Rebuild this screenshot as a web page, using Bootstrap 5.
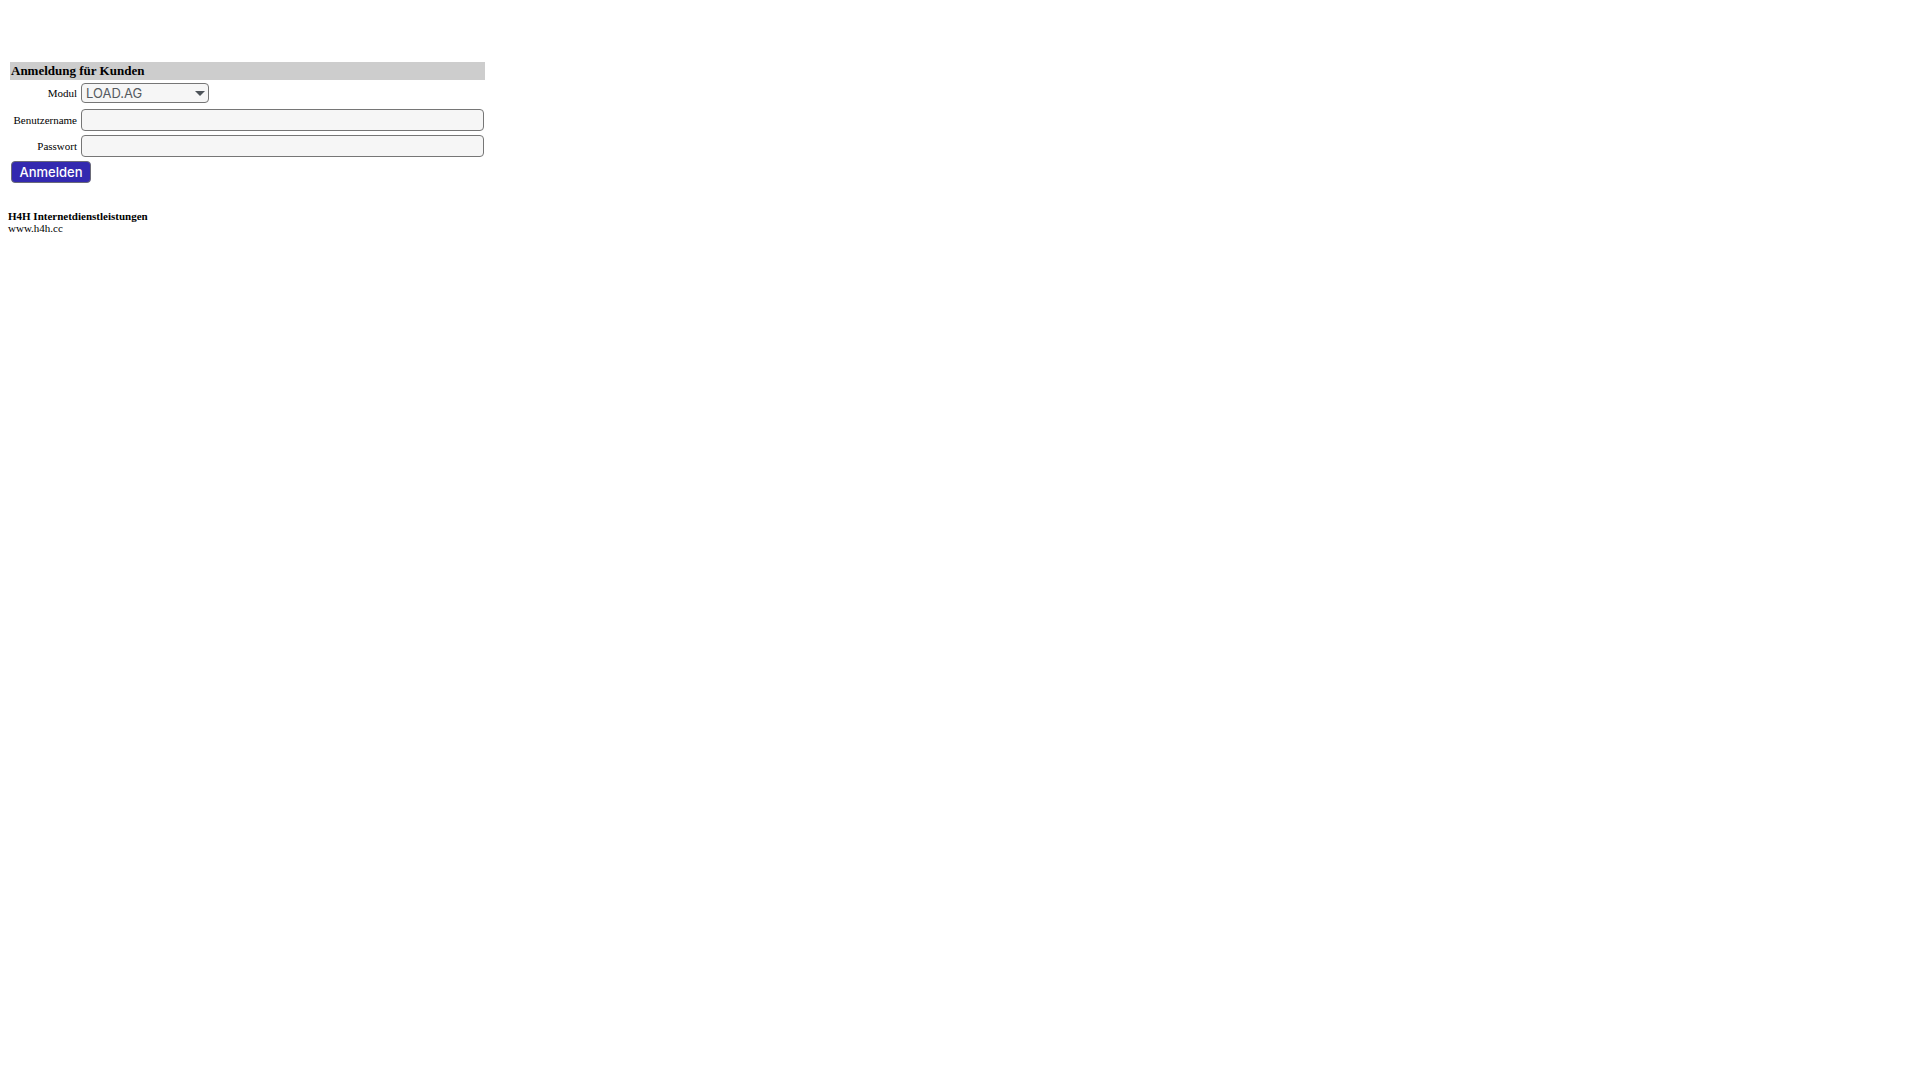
<!DOCTYPE html>
<html lang="de">
<head>
<meta charset="utf-8">
<meta name="viewport" content="width=device-width, initial-scale=1">
<title>Anmeldung für Kunden</title>
<link rel="stylesheet" href="https://cdn.jsdelivr.net/npm/bootstrap@5.3.0/dist/css/bootstrap.min.css">
<style>
body { font-family: "Liberation Serif", serif; font-size: 11px; line-height: 12px; color: #000; padding: 62px 8px 8px; text-rendering: optimizeSpeed; }
.login-form { max-width: 475px; margin: 0 2px 27px; }
.login-title { font-size: 13px; line-height: 16px; font-weight: 700; background: #cdcdcd; padding: 1px; margin: 0 0 3px; }
.login-row { gap: 4px; margin-bottom: 4px; padding-right: 1px; }
.login-label { flex: 0 0 67px; text-align: right; }
.login-field { font-family: Inter, sans-serif; font-size: 13px; line-height: 16px; height: 22px; color: #555a60; background-color: #f6f6f6; border: 1px solid #767676; border-radius: 4px; padding: 0 4px; min-width: 0; }
.login-select { width: 128px; height: 20px; appearance: none; background: #f6f6f6 url("data:image/svg+xml,%3Csvg xmlns='http://www.w3.org/2000/svg' viewBox='0 0 10 5'%3E%3Cpath fill='%234d5359' d='M0 0h10L5 5z'/%3E%3C/svg%3E") no-repeat right 3px center / 10px 5px; }
.login-module { margin-bottom: 6px; }
.login-submit { font-family: Inter, sans-serif; font-size: 13px; line-height: 16px; font-weight: 500; color: #fff; background: #3329b0; border: 1px solid #6b6b78; border-radius: 4px; height: 22px; min-width: 80px; padding: 0 6px; margin-left: 1px; }
</style>
<script src="https://cdn.jsdelivr.net/npm/bootstrap@5.3.0/dist/js/bootstrap.bundle.min.js"></script>
</head>
<body class="bg-white">
<main>
<form class="login-form">
  <h1 class="login-title">Anmeldung für Kunden</h1>
  <div class="login-row login-module d-flex align-items-center">
    <label class="login-label" for="modul">Modul</label>
    <select class="login-field login-select" id="modul"><option>LOAD.AG</option></select>
  </div>
  <div class="login-row d-flex align-items-center">
    <label class="login-label" for="user">Benutzername</label>
    <input class="login-field flex-grow-1" id="user" type="text" autocomplete="username">
  </div>
  <div class="login-row d-flex align-items-center">
    <label class="login-label" for="pass">Passwort</label>
    <input class="login-field flex-grow-1" id="pass" type="password" autocomplete="current-password">
  </div>
  <button class="login-submit d-block" type="submit">Anmelden</button>
</form>
</main>
<footer><strong class="d-block">H4H Internetdienstleistungen</strong>www.h4h.cc</footer>
</body>
</html>
